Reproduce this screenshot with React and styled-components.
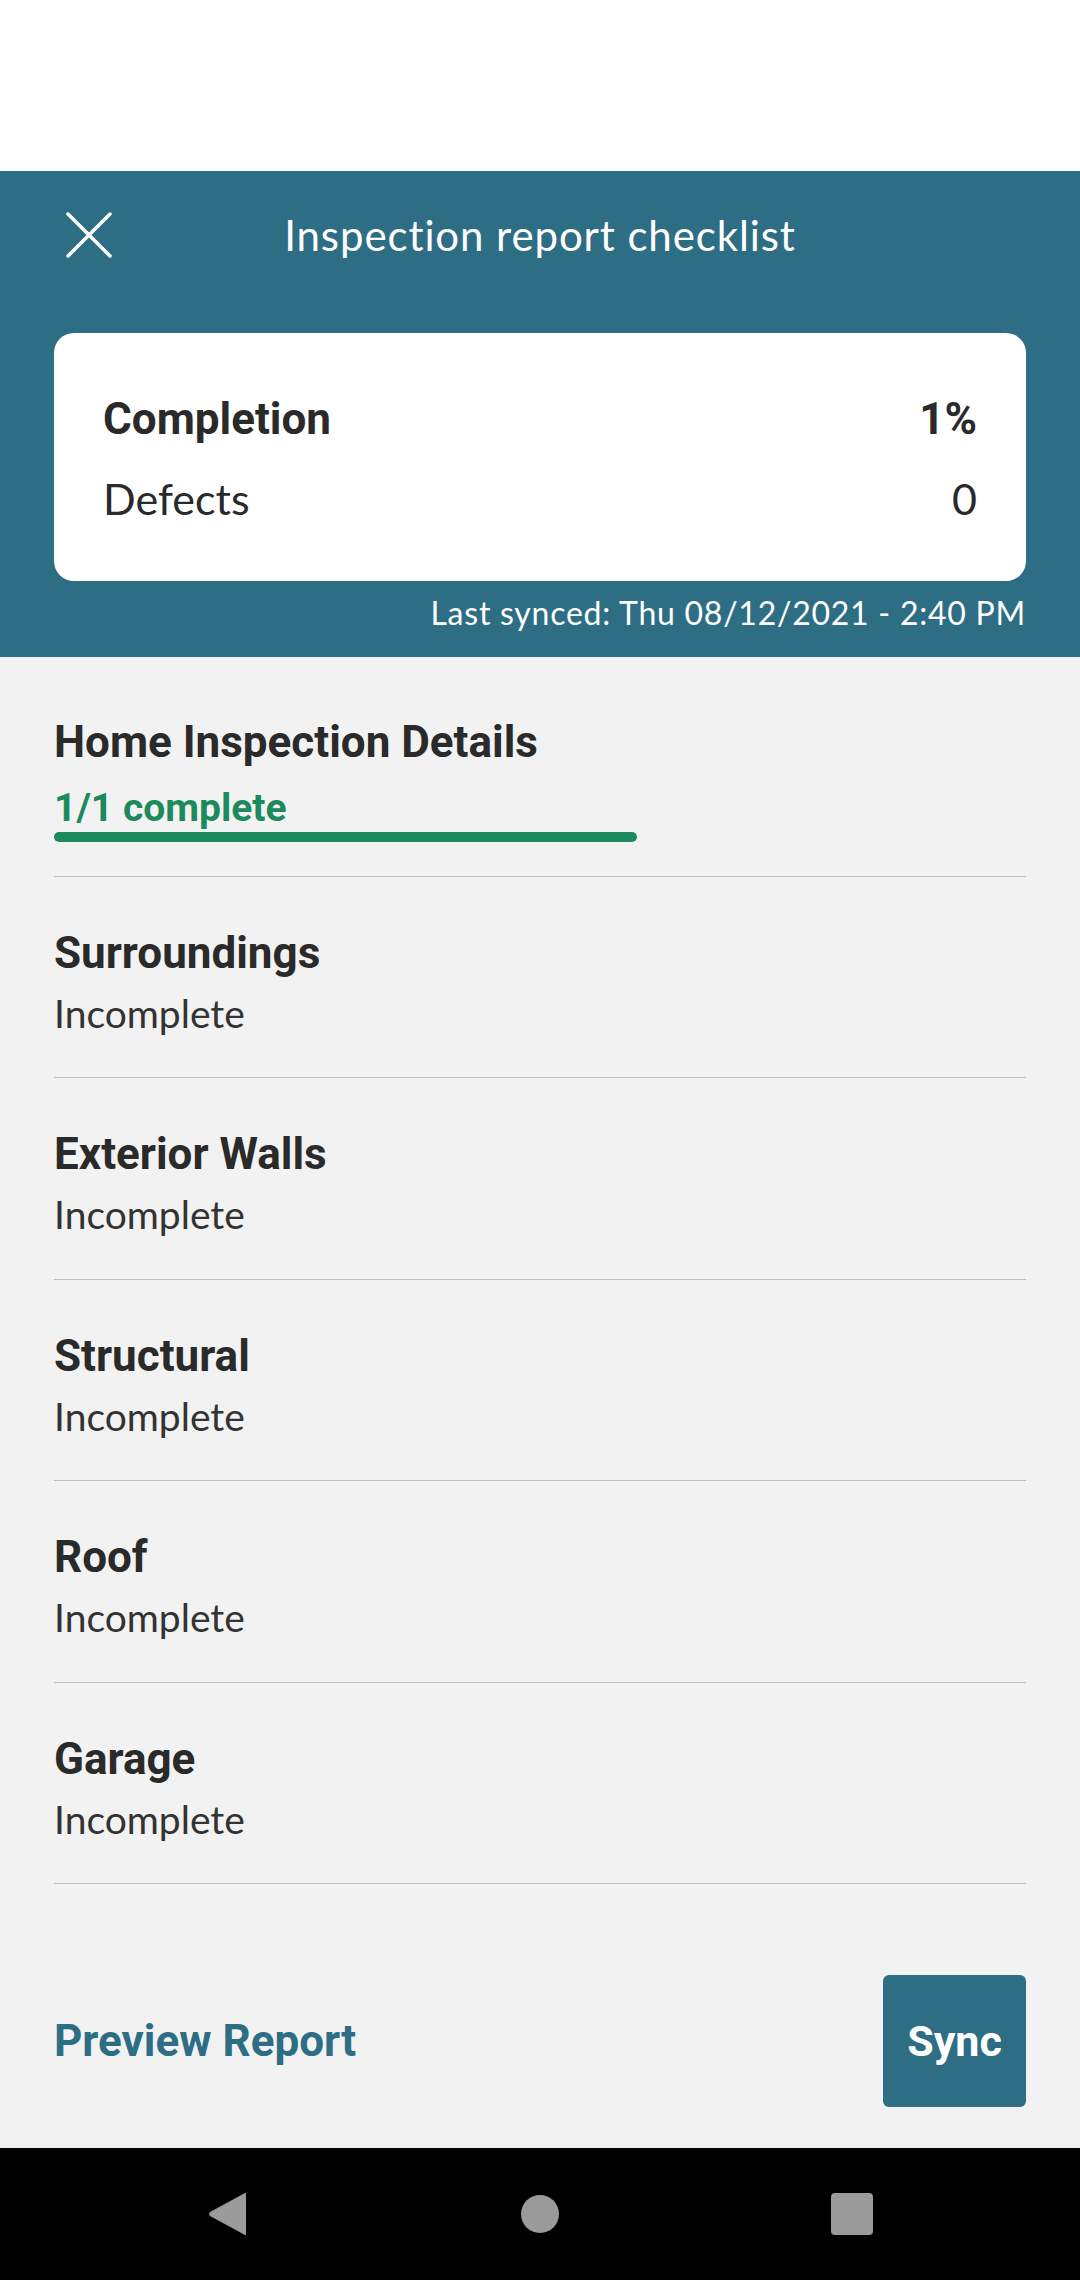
import React from "react";
import styled, { createGlobalStyle } from "styled-components";

const GlobalStyle = createGlobalStyle`
  html, body {
    margin: 0;
    padding: 0;
    background: #f2f2f2;
  }
  * {
    box-sizing: border-box;
  }
`;

const TEAL = "#2d6e84";
const GREEN = "#1c8a5c";
const DARK = "#2a2a2a";

const Page = styled.div`
  width: 1080px;
  min-height: 2280px;
  display: flex;
  flex-direction: column;
  background: #f2f2f2;
  font-family: Lato, "Open Sans", sans-serif;
`;

const StatusSpace = styled.div`
  height: 171px;
  background: #ffffff;
`;

const Header = styled.header`
  background: ${TEAL};
  padding: 0 54px 24px;
  color: #ffffff;
`;

const TopBar = styled.div`
  height: 128px;
  display: grid;
  grid-template-columns: 1fr auto 1fr;
  align-items: center;
`;

const CloseBtn = styled.button`
  width: 46px;
  height: 46px;
  margin-left: 12px;
  padding: 0;
  border: none;
  background: transparent;
  cursor: pointer;
  display: flex;
  align-items: center;
  justify-content: center;
`;

const Title = styled.h1`
  margin: 0;
  font-family: Lato, sans-serif;
  font-weight: 400;
  font-size: 42px;
  letter-spacing: 0.9px;
  line-height: 49px;
  color: #ffffff;
`;

const SummaryCard = styled.div`
  margin-top: 34px;
  background: #ffffff;
  border-radius: 20px;
  padding: 61px 49px 57px;
  display: flex;
  flex-direction: column;
  gap: 30px;
`;

const SummaryRow = styled.div`
  display: flex;
  justify-content: space-between;
  align-items: baseline;
  color: ${DARK};
  font-family: ${(p) => (p.$bold ? "Roboto, sans-serif" : "Lato, sans-serif")};
  font-weight: ${(p) => (p.$bold ? 700 : 400)};
  font-size: ${(p) => (p.$bold ? "44px" : "43px")};
  line-height: 50px;
`;

const Synced = styled.div`
  margin-top: 12px;
  text-align: right;
  font-size: 32px;
  letter-spacing: 0.75px;
  line-height: 40px;
  color: #ffffff;
`;

const List = styled.div`
  padding: 0 54px;
`;

const Section = styled.div`
  padding: ${(p) => (p.$first ? "60px 0 34px" : "51px 0 41.4px")};
  border-top: ${(p) => (p.$first ? "none" : "1px solid #bcbcc3")};
`;

const SectionTitle = styled.div`
  font-family: Roboto, sans-serif;
  font-weight: 700;
  font-size: 44px;
  line-height: 50px;
  color: ${DARK};
`;

const Status = styled.div`
  margin-top: 12px;
  font-size: 39px;
  line-height: 46px;
  color: #333333;
`;

const DoneStatus = styled.div`
  margin-top: 18px;
  font-family: Roboto, sans-serif;
  font-weight: 700;
  font-size: 39px;
  line-height: 46px;
  color: ${GREEN};
`;

const Bar = styled.div`
  margin-top: 1px;
  width: 583px;
  height: 10px;
  border-radius: 5px;
  background: ${GREEN};
`;

const Footer = styled.div`
  border-top: 1px solid #bcbcc3;
  margin: 0 54px;
  padding: 91px 0 41px;
  display: flex;
  justify-content: space-between;
  align-items: center;
`;

const PreviewLink = styled.a`
  font-family: Roboto, sans-serif;
  font-weight: 700;
  font-size: 44px;
  line-height: 50px;
  color: ${TEAL};
  text-decoration: none;
  cursor: pointer;
`;

const SyncButton = styled.button`
  width: 143px;
  height: 132px;
  border: none;
  border-radius: 6px;
  background: ${TEAL};
  color: #ffffff;
  font-family: Roboto, sans-serif;
  font-weight: 700;
  font-size: 43px;
  cursor: pointer;
`;

const NavBar = styled.nav`
  margin-top: auto;
  height: 132px;
  background: #000000;
  display: grid;
  grid-template-columns: repeat(3, 312px);
  justify-content: center;
  align-items: center;
  justify-items: center;
`;

const sections = [
  { name: "Surroundings" },
  { name: "Exterior Walls" },
  { name: "Structural" },
  { name: "Roof" },
  { name: "Garage" },
];

const App = () => {
  return (
    <Page>
      <GlobalStyle />
      <StatusSpace />
      <Header>
        <TopBar>
          <CloseBtn aria-label="close">
            <svg width="46" height="46" viewBox="0 0 46 46">
              <path
                d="M2 2 L44 44 M44 2 L2 44"
                stroke="#fff"
                strokeWidth="3.5"
                strokeLinecap="round"
              />
            </svg>
          </CloseBtn>
          <Title>Inspection report checklist</Title>
          <div />
        </TopBar>
        <SummaryCard>
          <SummaryRow $bold>
            <span>Completion</span>
            <span>1%</span>
          </SummaryRow>
          <SummaryRow>
            <span>Defects</span>
            <span>0</span>
          </SummaryRow>
        </SummaryCard>
        <Synced>Last synced: Thu 08/12/2021 - 2:40 PM</Synced>
      </Header>

      <List>
        <Section $first>
          <SectionTitle>Home Inspection Details</SectionTitle>
          <DoneStatus>1/1 complete</DoneStatus>
          <Bar />
        </Section>
        {sections.map((s) => (
          <Section key={s.name}>
            <SectionTitle>{s.name}</SectionTitle>
            <Status>Incomplete</Status>
          </Section>
        ))}
      </List>

      <Footer>
        <PreviewLink>Preview Report</PreviewLink>
        <SyncButton>Sync</SyncButton>
      </Footer>

      <NavBar>
        <svg width="40" height="46" viewBox="0 0 40 46">
          <path
            d="M37 2 Q38 1 38 3 L38 43 Q38 45 37 44 L2 25 Q0 23 2 21 Z"
            fill="#9a9a9a"
          />
        </svg>
        <svg width="40" height="40" viewBox="0 0 40 40">
          <circle cx="20" cy="20" r="19" fill="#9a9a9a" />
        </svg>
        <svg width="42" height="42" viewBox="0 0 42 42">
          <rect x="0" y="0" width="42" height="42" rx="4" fill="#9a9a9a" />
        </svg>
      </NavBar>
    </Page>
  );
};

export default App;
